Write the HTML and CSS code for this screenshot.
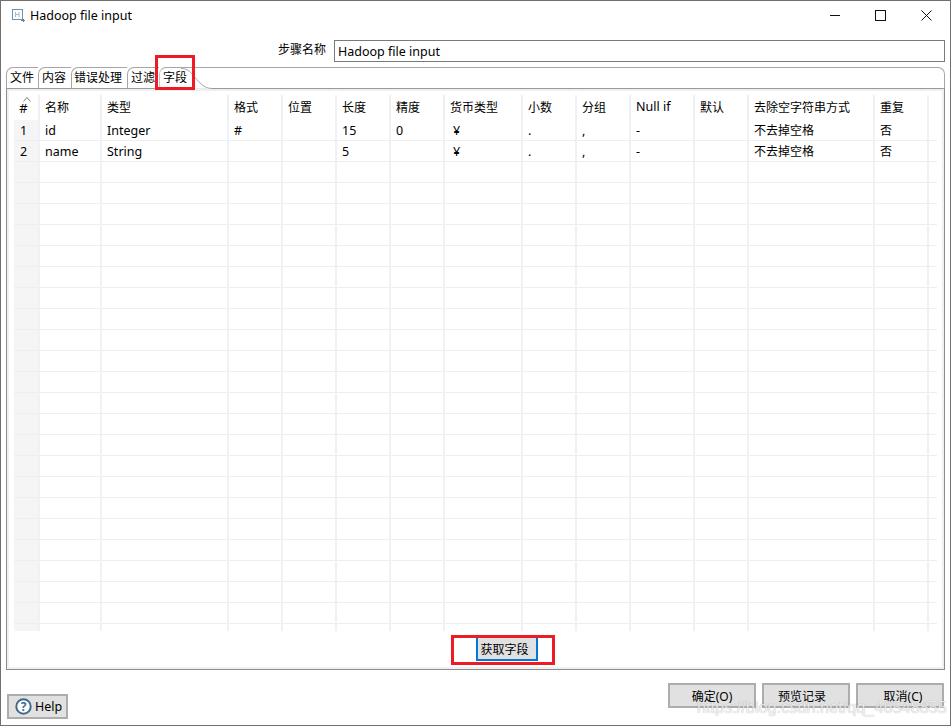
FILE: index.html
```html
<!DOCTYPE html>
<html lang="zh-CN">
<head>
    <meta charset="UTF-8">
    <meta name="viewport" content="width=device-width, initial-scale=1.0">
    <title>Hadoop file input</title>
    <link rel="stylesheet" href="styles.css">
</head>
<body>

    <div class="window">
        <div class="titlebar">
            <svg class="app-icon" width="14" height="14" viewBox="0 0 14 14">
                <rect x="0.5" y="0.5" width="10" height="10" fill="none" stroke="#7391ab"/>
                <path d="M3.5 3v5M7 3v5M3.5 5.5H7" fill="none" stroke="#a9bccb"/>
                <path d="M9 11.5h3.5M11 10l1.5 1.5L11 13" fill="none" stroke="#5f7f9a"/>
            </svg>
            <span class="title">Hadoop file input</span>
            <div class="window-controls">
                <svg width="10" height="10" viewBox="0 0 10 10"><path d="M0 5.5h10" stroke="#111"/></svg>
                <svg width="11" height="11" viewBox="0 0 11 11"><rect x="0.5" y="0.5" width="10" height="10" fill="none" stroke="#111"/></svg>
                <svg width="11" height="11" viewBox="0 0 11 11"><path d="M0.5 0.5l10 10M10.5 0.5l-10 10" stroke="#111"/></svg>
            </div>
        </div>

        <div class="step-row">
            <label class="step-label" for="step-name">步骤名称</label>
            <input class="step-input" id="step-name" type="text" value="Hadoop file input" readonly>
        </div>

        <div class="folder">
            <div class="tab-strip">
                <div class="tab">文件</div>
                <div class="tab">内容</div>
                <div class="tab">错误处理</div>
                <div class="tab">过滤</div>
                <div class="tab tab-active">
                    字段
                    <svg class="tab-curve" width="31" height="21" viewBox="0 0 31 21">
                        <path d="M0 0.5C8 0.5 10 5 14 9.5S23 20.5 31 20.5" fill="none" stroke="#a6a6a6"/>
                    </svg>
                </div>
                <div class="tab-rest"></div>
            </div>

            <div class="folder-body">
                <table class="fields">
                    <colgroup>
                        <col class="w26"><col class="w62"><col class="w127"><col class="w54"><col class="w54">
                        <col class="w54"><col class="w54"><col class="w78"><col class="w54"><col class="w54">
                        <col class="w64"><col class="w54"><col class="w126"><col class="w54"><col class="w8">
                    </colgroup>
                    <thead>
                        <tr>
                            <th class="num">
                                <svg class="sort" width="8" height="5" viewBox="0 0 8 5"><path d="M0.5 4.5l3.5-4 3.5 4" fill="none" stroke="#777"/></svg>
                                #
                            </th>
                            <th>名称</th>
                            <th>类型</th>
                            <th>格式</th>
                            <th>位置</th>
                            <th>长度</th>
                            <th>精度</th>
                            <th>货币类型</th>
                            <th>小数</th>
                            <th>分组</th>
                            <th class="en">Null if</th>
                            <th>默认</th>
                            <th>去除空字符串方式</th>
                            <th>重复</th>
                            <th class="end"></th>
                        </tr>
                    </thead>
                    <tbody>
                        <tr>
                            <td class="num">1</td>
                            <td>id</td>
                            <td>Integer</td>
                            <td>#</td>
                            <td></td>
                            <td>15</td>
                            <td>0</td>
                            <td class="yen">¥</td>
                            <td>.</td>
                            <td>,</td>
                            <td>-</td>
                            <td></td>
                            <td class="cjk">不去掉空格</td>
                            <td class="cjk">否</td>
                            <td class="end"></td>
                        </tr>
                        <tr>
                            <td class="num">2</td>
                            <td>name</td>
                            <td>String</td>
                            <td></td>
                            <td></td>
                            <td>5</td>
                            <td></td>
                            <td class="yen">¥</td>
                            <td>.</td>
                            <td>,</td>
                            <td>-</td>
                            <td></td>
                            <td class="cjk">不去掉空格</td>
                            <td class="cjk">否</td>
                            <td class="end"></td>
                        </tr>
                        <!-- empty rows: the ruling comes from the background -->
                        <tr class="filler">
                            <td class="num"></td>
                            <td></td><td></td><td></td><td></td><td></td><td></td><td></td>
                            <td></td><td></td><td></td><td></td><td></td><td></td>
                            <td class="end"></td>
                        </tr>
                    </tbody>
                </table>

                <div class="get-fields">
                    <button class="btn btn-focus">获取字段</button>
                </div>
            </div>
        </div>

        <div class="footer">
            <button class="btn btn-help">
                <svg width="17" height="17" viewBox="0 0 17 17">
                    <circle cx="8.5" cy="8.5" r="7.2" fill="#fff" stroke="#3f6b8f" stroke-width="2"/>
                    <text class="help-mark" x="8.5" y="12.5" text-anchor="middle">?</text>
                </svg>
                Help
            </button>
            <div class="actions">
                <button class="btn btn-action">确定(O)</button>
                <button class="btn btn-action btn-preview">预览记录</button>
                <button class="btn btn-action btn-cancel">取消(C)</button>
            </div>
        </div>

        <!-- annotations painted on top of the dialog -->
        <div class="mark mark-tab"></div>
        <div class="mark mark-button"></div>
        <div class="watermark">https://blog.csdn.net/qq_46548855</div>
    </div>

</body>
</html>
```

FILE: styles.css
```css
/* General Reset */
* {
    margin: 0;
    padding: 0;
    box-sizing: border-box;
    font-family: "Noto Sans", "Noto Sans CJK SC", sans-serif;
}

body {
    background: #fff;
    color: #000;
    font-size: 12px;
}

.window {
    position: relative;
    display: flex;
    flex-direction: column;
    width: 951px;
    height: 726px;
    border: 1px solid #707070;
    overflow: hidden;
    background: #fff;
}

/* Title bar */
.titlebar {
    display: flex;
    align-items: center;
    height: 29px;
    padding-left: 11px;
    padding-bottom: 1px;
}

.app-icon {
    margin-right: 4px;
    margin-top: 2px;
}

.title {
    font-size: 12.5px;
}

.window-controls {
    display: flex;
    align-items: center;
    gap: 35px;
    margin-left: auto;
    padding-right: 18px;
}

/* Step name */
.step-row {
    display: flex;
    align-items: center;
    justify-content: flex-end;
    height: 22px;
    margin-top: 10px;
    padding-right: 5px;
}

.step-label {
    margin-right: 8px;
    margin-top: -4px;
}

.step-input {
    width: 611px;
    height: 22px;
    padding-left: 3px;
    border: 1px solid #7a7a7a;
    font-size: 12.5px;
    color: #000;
    outline: none;
}

/* Tab folder */
.folder {
    display: flex;
    flex-direction: column;
    flex: 1;
    margin: 5px 5px 0;
}

.tab-strip {
    display: flex;
    height: 22px;
    border-bottom: 1px solid #9a9a9a;
}

.tab {
    padding-left: 3px;
    line-height: 20px;
    border-top: 1px solid #a6a6a6;
    border-left: 1px solid #a6a6a6;
    border-top-left-radius: 7px;
}

.tab:nth-child(1) { width: 32px; }
.tab:nth-child(2) { width: 33px; }
.tab:nth-child(3) { width: 56px; padding-left: 2px; }
.tab:nth-child(4) { width: 32px; }

.tab-active {
    position: relative;
    width: 53px;
    height: 22px;
    border-left-color: #c4c4c4;
    border-bottom: 1px solid #ececec;
}

.tab-curve {
    position: absolute;
    top: 0;
    right: 0;
}

.tab-rest {
    flex: 1;
    border-top: 1px solid #a6a6a6;
    border-right: 1px solid #a6a6a6;
    border-top-right-radius: 7px;
}

.folder-body {
    display: flex;
    flex-direction: column;
    flex: 1;
    padding: 6px 0 0 7px;
    border: 1px solid #8c8c8c;
    border-top: none;
    box-shadow: inset 2px 0 0 #f0f0f0, inset -2px 0 0 #f0f0f0, inset 0 2px 0 #f0f0f0, inset 0 -2px 0 #f0f0f0;
}

/* Fields table */
.fields {
    table-layout: fixed;
    width: 923px;
    border-collapse: separate;
    border-spacing: 0;
}

.w26 { width: 26px; }
.w62 { width: 62px; }
.w127 { width: 127px; }
.w54 { width: 54px; }
.w78 { width: 78px; }
.w64 { width: 64px; }
.w126 { width: 126px; }
.w8 { width: 8px; }

.fields th {
    position: relative;
    height: 25px;
    padding: 0 0 2px 5px;
    border-right: 2px solid #f0f0f0;
    font-size: 12px;
    font-weight: normal;
    text-align: left;
}

.fields th.en {
    font-size: 12.5px;
}

.fields th.num {
    padding: 0 5px 0 0;
    font-size: 13px;
    text-align: center;
}

.sort {
    position: absolute;
    top: 2px;
    left: 9px;
}

.fields td {
    height: 21px;
    padding: 0 0 0 5px;
    border-right: 2px solid #eef2f8;
    border-bottom: 1px solid #eeeeee;
    font-size: 12.5px;
    white-space: nowrap;
}

.fields td.cjk {
    font-size: 12px;
}

.fields td.yen {
    padding-left: 8px;
}

.fields td.num {
    padding: 0 5px 0 0;
    text-align: center;
    background: #f5f5f5;
}

.fields .end {
    border-right: none;
}

.fields th.end {
    border-right: none;
}

.fields .filler td {
    height: 469px;
    border-bottom: none;
    background-image: repeating-linear-gradient(to bottom, transparent 0, transparent 20px, #eeeeee 20px, #eeeeee 21px);
}

.fields .filler td.num {
    background-color: #f5f5f5;
}

/* Buttons */
.btn {
    background: #e1e1e1;
    border: 2px solid #adadad;
    font-size: 12px;
    color: #000;
}

.get-fields {
    display: flex;
    justify-content: center;
    margin-top: 5px;
    padding-left: 55px;
}

.btn-focus {
    width: 62px;
    height: 25px;
    padding-right: 4px;
    border-color: #0078d7;
}

.footer {
    display: flex;
    justify-content: space-between;
    height: 55px;
    padding: 13px 6px 0 6px;
}

.btn-help {
    display: flex;
    align-items: center;
    gap: 3px;
    width: 61px;
    height: 25px;
    margin-top: 11px;
    padding-left: 6px;
    font-size: 12.5px;
}

.help-mark {
    font-size: 12px;
    font-weight: bold;
    fill: #3f6b8f;
}

.actions {
    display: flex;
    gap: 6px;
}

.btn-action {
    width: 88px;
    height: 25px;
}

.btn-preview {
    padding-right: 8px;
}

.btn-cancel {
    padding-left: 6px;
}

/* Annotations */
.mark {
    position: absolute;
    border: 3px solid #ed1c24;
}

.mark-tab {
    left: 154px;
    top: 54px;
    width: 40px;
    height: 35px;
}

.mark-button {
    left: 450px;
    top: 634px;
    width: 104px;
    height: 30px;
}

.watermark {
    position: absolute;
    left: 696px;
    top: 697px;
    font-family: "Liberation Sans", sans-serif;
    font-size: 16.3px;
    color: rgba(255, 255, 255, 0.8);
    text-shadow: 0 0 1px rgba(0, 0, 0, 0.35);
    white-space: nowrap;
}
```
